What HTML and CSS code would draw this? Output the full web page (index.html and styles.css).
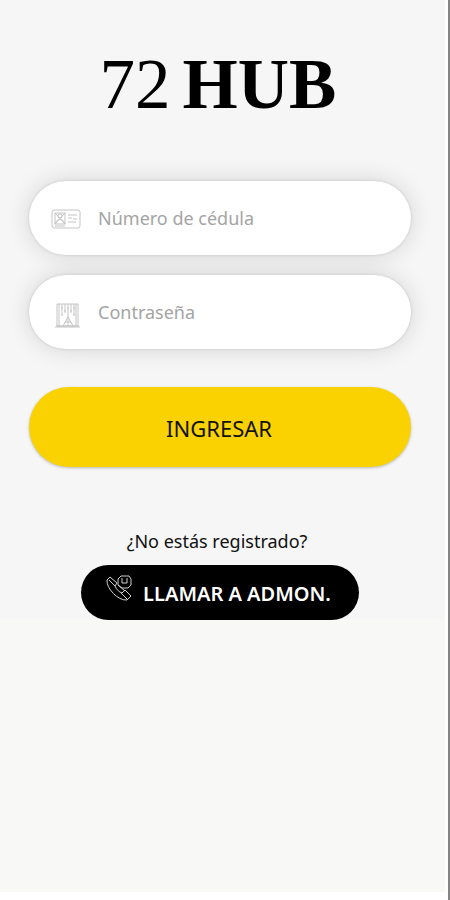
FILE: index.html
```html
<!DOCTYPE html>
<html lang="es">
<head>
<meta charset="utf-8">
<meta name="viewport" content="width=device-width, initial-scale=1">
<title>72 HUB</title>
<link rel="stylesheet" href="styles.css">
</head>
<body>
<div class="page">
  <main class="login">
    <h1 class="logo"><span class="logo-number">72</span><span class="logo-name">HUB</span></h1>
    <form class="form">
      <label class="field">
        <svg class="field-icon" viewBox="0 0 32 32" aria-hidden="true">
          <rect x="2" y="8" width="28" height="18" rx="2"/>
          <rect x="5" y="11" width="10" height="11"/>
          <circle cx="10" cy="14" r="2"/>
          <path d="M6 21c0-5 8-5 8 0M5 11l10 11M15 11L5 22M18 13h9M18 16h4M23 17h4M18 20h8M5 24h10"/>
        </svg>
        <input class="input" type="text" placeholder="Número de cédula" aria-label="Número de cédula">
      </label>
      <label class="field">
        <svg class="field-icon" viewBox="0 0 32 32" aria-hidden="true">
          <path d="M7 8h21v22H7zM5 31h25M6 30h23M9 8v22M12 8v11M15 8v9M18 8v12M21 8v9M24 8v11M26 8v22M11 12h2M14 15h2M17 12h2M20 15h2M23 12h2M11 19h2M23 19h2M13 30l5-9 5 9M15 26h6M18 20v10"/>
        </svg>
        <input class="input" type="password" placeholder="Contraseña" aria-label="Contraseña">
      </label>
      <button class="submit" type="button">INGRESAR</button>
    </form>
    <section class="register">
      <p class="question">¿No estás registrado?</p>
      <a class="call" href="#">
        <svg class="call-icon" viewBox="0 0 28 28" aria-hidden="true">
          <path d="M5 3 2 6c-1 8 11 21 20 20l4-4-6-6-3 3c-3-1-6-4-7-7l2-3zM4 6l6 6M16 19l6 6"/>
          <path d="M13 5l3-3h8l2 3v6l-3 3h-6l-4-3zM17 4v5h5V4M13 11l7 6"/>
        </svg>
        <span>LLAMAR A ADMON.</span>
      </a>
    </section>
  </main>
</div>
</body>
</html>
```
FILE: styles.css
```css
* {
  box-sizing: border-box;
}

body {
  margin: 0;
  background: #fff;
  font-family: "Noto Sans", "Open Sans", sans-serif;
  color: #111;
}

.page {
  min-height: 100vh;
  padding: 0 3px 8px 0;
  border-right: 2px solid #848484;
  display: flex;
  flex-direction: column;
  background: #fff;
}

.login {
  flex: 1;
  padding: 44px 34px 0 29px;
  background: linear-gradient(#f6f6f6 619px, #f8f8f6 619px);
}

.logo {
  display: flex;
  justify-content: center;
  gap: 12px;
  margin: 0 0 57px;
  padding-right: 4px;
  font-family: "Liberation Serif", serif;
  font-size: 71px;
  line-height: 80px;
  color: #000;
}

.logo-number {
  font-weight: 400;
}

.form {
  display: flex;
  flex-direction: column;
  gap: 20px;
}

.field {
  display: flex;
  align-items: center;
  gap: 16px;
  height: 74px;
  padding: 0 24px 0 21px;
  border-radius: 40px;
  background: #fff;
  box-shadow: 0 0 3px rgba(0, 0, 0, 0.14), 0 0 24px rgba(0, 0, 0, 0.14);
}

.field,
.submit {
  position: relative;
}

.field-icon {
  flex: none;
  width: 32px;
  height: 32px;
  fill: none;
  stroke: #c4c4c4;
  stroke-width: 1;
}

.input {
  flex: 1;
  min-width: 0;
  padding: 0;
  border: 0;
  outline: 0;
  background: transparent;
  font: inherit;
  font-size: 18px;
  line-height: 28px;
  color: #333;
}

.input::placeholder {
  color: #a4a4a4;
  opacity: 1;
}

.submit {
  height: 80px;
  margin-top: 18px;
  padding: 2px 2px 0 0;
  border: 0;
  border-radius: 40px;
  background: #fad201;
  box-shadow: 0 1px 3px rgba(0, 0, 0, 0.25);
  font: inherit;
  font-size: 22px;
  color: #111;
}

.register {
  display: flex;
  flex-direction: column;
  align-items: center;
  margin-top: 60px;
}

.question {
  margin: 0 0 10px;
  padding-right: 6px;
  font-size: 18px;
  line-height: 28px;
}

.call {
  display: flex;
  align-items: center;
  gap: 10px;
  height: 55px;
  padding: 2px 28px 0 24px;
  border-radius: 28px;
  background: #000;
  color: #fff;
  font-size: 20px;
  font-weight: 600;
  text-decoration: none;
}

.call-icon {
  flex: none;
  width: 28px;
  height: 28px;
  margin-bottom: 12px;
  fill: none;
  stroke: #d0d0d0;
  stroke-width: 1;
}
```
